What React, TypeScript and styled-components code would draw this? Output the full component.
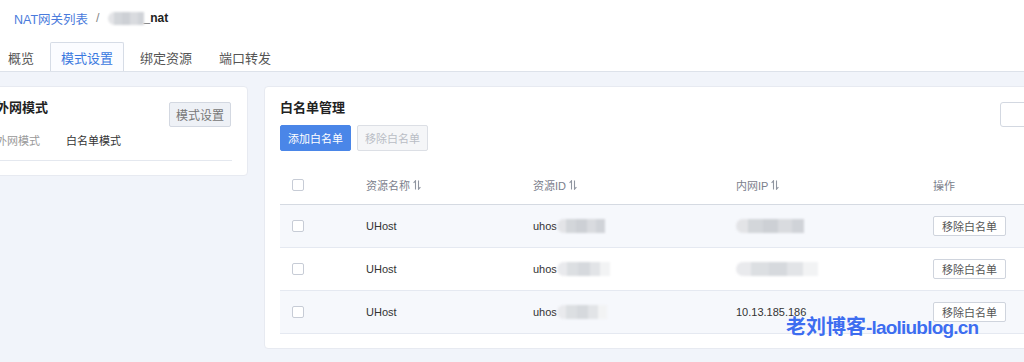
import React from "react";
import styled, { createGlobalStyle } from "styled-components";

const GlobalStyle = createGlobalStyle`
  html, body {
    margin: 0;
    padding: 0;
    background: #f1f4fa;
    font-family: "Liberation Sans", "Noto Sans CJK SC", sans-serif;
    color: #333;
    overflow: hidden;
  }
`;

const Page = styled.div`
  position: relative;
  width: 1024px;
  height: 362px;
  overflow: hidden;
`;

const Header = styled.div`
  background: #fff;
  padding-top: 10px;
  border-bottom: 1px solid #dde2ea;
`;

const Breadcrumb = styled.div`
  display: flex;
  align-items: center;
  height: 16px;
  padding-left: 14px;
  font-size: 12.5px;
`;

const Crumb = styled.span`
  color: #4a7bdc;
`;

const Sep = styled.span`
  color: #888;
  margin: 0 8px;
`;

const Current = styled.span`
  color: #222;
  font-weight: bold;
  font-size: 12px;
`;

const Blur = styled.span<{ $w: number; $h?: number; $light?: boolean }>`
  display: inline-block;
  width: ${(p) => p.$w}px;
  height: ${(p) => p.$h ?? 14}px;
  border-radius: 7px 0 0 7px;
  background: ${(p) =>
    p.$light
      ? "linear-gradient(90deg, #e9eaed 0 18%, #dcdfe2 18% 40%, #d6d9dd 40% 62%, #e2e4e7 62% 82%, #f2f3f4 82%)"
      : "linear-gradient(90deg, #e3e4e7 0 18%, #d3d6da 18% 40%, #cdd0d5 40% 62%, #d9dbdf 62% 82%, #d0d3d8 82%)"};
  filter: blur(0.8px);
  vertical-align: middle;
`;

const Tabs = styled.div`
  display: flex;
  gap: 5px;
  margin-top: 16px;
  margin-left: -3px;
  height: 29px;
`;

const Tab = styled.div<{ $active?: boolean }>`
  display: flex;
  align-items: center;
  padding: 0 10px;
  font-size: 13px;
  color: ${(p) => (p.$active ? "#3a78e0" : "#555")};
  background: ${(p) => (p.$active ? "#fbfcff" : "transparent")};
  border: 1px solid ${(p) => (p.$active ? "#d6dce6" : "transparent")};
  border-bottom: none;
  border-radius: 2px 2px 0 0;
`;

const Body = styled.div`
  display: flex;
  align-items: flex-start;
  gap: 16px;
  padding-top: 14px;
  margin-left: -20px;
`;

const Card = styled.div<{ $w: number }>`
  flex: none;
  width: ${(p) => p.$w}px;
  box-sizing: border-box;
  background: #fff;
  border: 1px solid #e7eaf1;
  border-radius: 4px;
  padding: 13px 15px 14px;
`;

const CardHead = styled.div`
  display: flex;
  justify-content: space-between;
  align-items: flex-start;
`;

const CardTitle = styled.div`
  font-size: 13px;
  font-weight: bold;
  line-height: 16px;
  color: #222;
`;

const GreyButton = styled.button`
  margin-top: 2px;
  margin-right: 1px;
  height: 25px;
  padding: 0 6px;
  font-family: inherit;
  font-size: 12px;
  color: #777;
  background: #eef1f6;
  border: 1px solid #d3d8e1;
  border-radius: 2px;
`;

const InfoRow = styled.div`
  display: flex;
  margin-top: 6px;
  padding-bottom: 11px;
  line-height: 16px;
  font-size: 11px;
  border-bottom: 1px solid #e4e8ef;
`;

const InfoLabel = styled.span`
  width: 70px;
  color: #999;
`;

const InfoValue = styled.span`
  color: #333;
`;

const Toolbar = styled.div`
  display: flex;
  justify-content: space-between;
  align-items: flex-start;
`;

const ToolLeft = styled.div`
  display: flex;
  flex-direction: column;
  align-items: flex-start;
  gap: 9px;
`;

const Buttons = styled.div`
  display: flex;
  gap: 6px;
`;

const Button = styled.button<{ $primary?: boolean }>`
  height: 26px;
  padding: 0 7px;
  font-family: inherit;
  font-size: 11px;
  border-radius: 2px;
  color: ${(p) => (p.$primary ? "#fff" : "#b9bdc5")};
  background: ${(p) => (p.$primary ? "#4a86e8" : "#f5f6f8")};
  border: 1px solid ${(p) => (p.$primary ? "#4a86e8" : "#dcdfe5")};
`;

const Search = styled.div`
  margin-top: 2px;
  width: 180px;
  height: 25px;
  box-sizing: border-box;
  border: 1px solid #d3d8e1;
  border-radius: 3px;
  background: #fff;
`;

const Table = styled.div`
  margin-top: 14px;
  font-size: 11px;
`;

const Row = styled.div<{ $head?: boolean; $shade?: boolean }>`
  display: grid;
  grid-template-columns: 74px 167px 203px 197px 1fr;
  align-items: center;
  height: ${(p) => (p.$head ? 39 : 42)}px;
  background: ${(p) => (p.$shade ? "#f6f8fc" : "#fff")};
  border-bottom: 1px solid ${(p) => (p.$head ? "#d5dae2" : "#e5e9f1")};
  color: ${(p) => (p.$head ? "#7b808c" : "#333")};
`;

const Cell = styled.div`
  display: flex;
  align-items: center;
  padding-left: 12px;
`;

const Check = styled.span`
  display: inline-block;
  width: 10px;
  height: 10px;
  border: 1px solid #c7ccd6;
  border-radius: 2px;
  background: #fff;
`;

const SmallButton = styled.button`
  height: 20px;
  padding: 0 8px;
  font-family: inherit;
  font-size: 11px;
  color: #555;
  background: #fff;
  border: 1px solid #cfd4dd;
  border-radius: 2px;
`;

const Watermark = styled.div`
  position: absolute;
  left: 786px;
  top: 314px;
  font-family: "Liberation Sans", "Noto Sans CJK SC", sans-serif;
  font-size: 20px;
  font-weight: bold;
  line-height: 26px;
  color: #3d6df0;
  text-shadow: 0 0 1px #fff, 0 0 2px #fff;
  white-space: nowrap;
`;

const WatermarkLatin = styled.span`
  font-size: 19px;
  letter-spacing: -0.8px;
`;

const SortIcon = () => (
  <svg width="8" height="10" viewBox="0 0 8 10" style={{ marginLeft: 3 }}>
    <path d="M2.5 9.5V0.8L0.6 2.8M5.5 0.5v8.7l1.9-2" fill="none" stroke="#8f95a0" strokeWidth="1.1" />
  </svg>
);

const rows = [
  { id: 48, ip: <Blur $w={68} />, shade: true },
  { id: 53, ip: <Blur $w={82} $light />, shade: false },
  { id: 50, ip: "10.13.185.186", shade: true },
];

export default function App() {
  return (
    <Page>
      <GlobalStyle />
      <Header>
        <Breadcrumb>
          <Crumb>NAT网关列表</Crumb>
          <Sep>/</Sep>
          <Blur $w={36} $h={13} />
          <Current>_nat</Current>
        </Breadcrumb>
        <Tabs>
          <Tab>概览</Tab>
          <Tab $active>模式设置</Tab>
          <Tab>绑定资源</Tab>
          <Tab>端口转发</Tab>
        </Tabs>
      </Header>

      <Body>
        <Card $w={268}>
          <CardHead>
            <CardTitle>外网模式</CardTitle>
            <GreyButton>模式设置</GreyButton>
          </CardHead>
          <InfoRow>
            <InfoLabel>外网模式</InfoLabel>
            <InfoValue>白名单模式</InfoValue>
          </InfoRow>
        </Card>

        <Card $w={932}>
          <Toolbar>
            <ToolLeft>
              <CardTitle>白名单管理</CardTitle>
              <Buttons>
                <Button $primary>添加白名单</Button>
                <Button disabled>移除白名单</Button>
              </Buttons>
            </ToolLeft>
            <Search />
          </Toolbar>

          <Table>
            <Row $head>
              <Cell>
                <Check />
              </Cell>
              <Cell>
                资源名称
                <SortIcon />
              </Cell>
              <Cell>
                资源ID
                <SortIcon />
              </Cell>
              <Cell>
                内网IP
                <SortIcon />
              </Cell>
              <Cell>操作</Cell>
            </Row>
            {rows.map((r, i) => (
              <Row key={i} $shade={r.shade}>
                <Cell>
                  <Check />
                </Cell>
                <Cell>UHost</Cell>
                <Cell>
                  uhos
                  <Blur $w={r.id} $light={i > 0} />
                </Cell>
                <Cell>{r.ip}</Cell>
                <Cell>
                  <SmallButton>移除白名单</SmallButton>
                </Cell>
              </Row>
            ))}
          </Table>
        </Card>
      </Body>

      <Watermark>
        老刘博客<WatermarkLatin>-laoliublog.cn</WatermarkLatin>
      </Watermark>
    </Page>
  );
}
